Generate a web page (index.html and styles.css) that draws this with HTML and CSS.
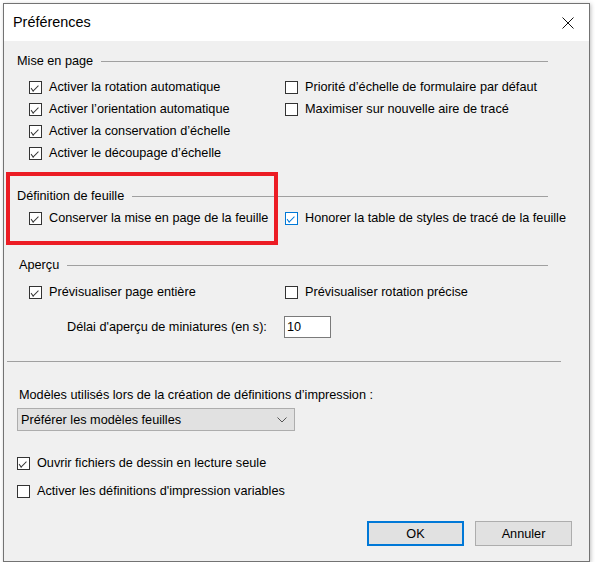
FILE: index.html
```html
<!DOCTYPE html>
<html lang="fr">
<head>
    <meta charset="UTF-8">
    <title>Préférences</title>
    <link rel="stylesheet" href="styles.css">
</head>
<body>
    <div class="window">
        <div class="titlebar">
            <span class="title">Préférences</span>
            <svg class="close" width="12" height="12" viewBox="0 0 12 12">
                <path d="M0.5 0.5 L11.5 11.5 M11.5 0.5 L0.5 11.5" stroke="#111" stroke-width="1" fill="none"/>
            </svg>
        </div>

        <div class="content">
            <!-- Mise en page -->
            <div class="group-head"><span>Mise en page</span></div>
            <div class="cols first-rows">
                <div class="col-left">
                    <div class="check on"><span class="box"></span>Activer la rotation automatique</div>
                    <div class="check on"><span class="box"></span>Activer l’orientation automatique</div>
                    <div class="check on"><span class="box"></span>Activer la conservation d’échelle</div>
                    <div class="check on"><span class="box"></span>Activer le découpage d’échelle</div>
                </div>
                <div class="col-right">
                    <div class="check"><span class="box"></span>Priorité d’échelle de formulaire par défaut</div>
                    <div class="check"><span class="box"></span>Maximiser sur nouvelle aire de tracé</div>
                </div>
            </div>

            <!-- Définition de feuille -->
            <div class="group-head head-sheet"><span>Définition de feuille</span></div>
            <div class="cols sheet-rows">
                <div class="col-left">
                    <div class="check on"><span class="box"></span>Conserver la mise en page de la feuille</div>
                </div>
                <div class="col-right">
                    <div class="check on focus"><span class="box"></span>Honorer la table de styles de tracé de la feuille</div>
                </div>
            </div>

            <!-- Aperçu -->
            <div class="group-head head-preview"><span>Aperçu</span></div>
            <div class="cols preview-rows">
                <div class="col-left">
                    <div class="check on"><span class="box"></span>Prévisualiser page entière</div>
                </div>
                <div class="col-right">
                    <div class="check"><span class="box"></span>Prévisualiser rotation précise</div>
                </div>
            </div>
            <div class="delay-row">
                <span class="delay-label">Délai d'aperçu de miniatures (en s):</span>
                <span class="text-input">10</span>
            </div>

            <div class="separator"></div>

            <div class="models-label">Modèles utilisés lors de la création de définitions d’impression :</div>
            <div class="select">
                <span>Préférer les modèles feuilles</span>
                <svg width="10" height="6" viewBox="0 0 10 6">
                    <path d="M0.5 0.5 L5 5 L9.5 0.5" stroke="#555" stroke-width="1" fill="none"/>
                </svg>
            </div>

            <div class="check on bottom-check first"><span class="box"></span>Ouvrir fichiers de dessin en lecture seule</div>
            <div class="check bottom-check second"><span class="box"></span>Activer les définitions d'impression variables</div>

            <div class="buttons">
                <button class="btn default">OK</button>
                <button class="btn">Annuler</button>
            </div>
        </div>

        <div class="highlight"></div>
    </div>
</body>
</html>
```

FILE: styles.css
```css
body {
    margin: 0;
    background-color: #ffffff;
    font-family: "Liberation Sans", Arial, sans-serif;
    font-size: 12.7px;
    color: #000;
}
.window {
    position: relative;
    margin: 3px 0 0 3px;
    width: 587px;
    height: 559px;
    box-sizing: border-box;
    border: 1px solid #737373;
    background-color: #f0f0f0;
    box-shadow: 1px 1px 4px rgba(0,0,0,0.25);
}
.titlebar {
    height: 37px;
    background-color: #ffffff;
    display: flex;
    align-items: center;
    justify-content: space-between;
    padding: 0 15px 0 9px;
}
.title {
    font-size: 14.4px;
    padding-bottom: 1px;
}
.close {
    margin-top: 1px;
}
.content {
    padding: 12px 0 0 13px;
}
.group-head {
    width: 531px;
    height: 16px;
    display: flex;
    align-items: center;
}
.group-head::after {
    content: "";
    flex: 1;
    height: 1px;
    margin-left: 8px;
    background-color: #a0a0a0;
}
.head-sheet {
    margin-top: 24px;
}
.head-preview {
    margin-top: 28px;
}
.head-preview span {
    margin-left: 2px;
}
.cols {
    display: flex;
    padding-left: 12px;
}
.first-rows {
    margin-top: 7px;
}
.sheet-rows {
    margin-top: 3px;
}
.preview-rows {
    margin-top: 8px;
}
.col-left {
    width: 256px;
}
.check {
    height: 22px;
    display: flex;
    align-items: center;
    white-space: nowrap;
}
.box {
    width: 13px;
    height: 13px;
    box-sizing: border-box;
    border: 1px solid #333;
    background-color: #fff;
    margin-right: 7px;
    flex: none;
    position: relative;
}
.check.on .box::after {
    content: "";
    position: absolute;
    left: 1px;
    top: 4px;
    width: 7px;
    height: 3px;
    border-left: 1px solid #333;
    border-bottom: 1px solid #333;
    transform: rotate(-45deg) skewX(-8deg);
    transform-origin: 3px 2px;
}
.check.focus .box {
    border-color: #0078d7;
}
.check.focus .box::after {
    border-color: #0078d7;
}
.delay-row {
    margin-top: 13px;
    height: 22px;
    display: flex;
    align-items: center;
    padding-left: 50px;
}
.delay-label {
    width: 217px;
}
.text-input {
    width: 47px;
    height: 22px;
    box-sizing: border-box;
    border: 1px solid #7a7a7a;
    background-color: #fff;
    padding-left: 2px;
    line-height: 20px;
}
.separator {
    margin: 23px 0 0 -10px;
    width: 554px;
    height: 1px;
    background-color: #a0a0a0;
}
.models-label {
    margin: 25px 0 0 2px;
    line-height: 16px;
}
.select {
    margin-top: 5px;
    width: 278px;
    height: 23px;
    box-sizing: border-box;
    border: 1px solid #adadad;
    background-color: #e1e1e1;
    display: flex;
    align-items: center;
    justify-content: space-between;
    padding: 0 7px 0 3px;
}
.bottom-check.first {
    margin-top: 21px;
}
.bottom-check.second {
    margin-top: 6px;
}
.buttons {
    margin-top: 19px;
    width: 555px;
    display: flex;
    justify-content: flex-end;
    gap: 11px;
}
.btn {
    width: 97px;
    height: 25px;
    box-sizing: border-box;
    border: 1px solid #adadad;
    background-color: #e1e1e1;
    font-family: "Liberation Sans", Arial, sans-serif;
    font-size: 12.7px;
    color: #000;
    padding: 0;
}
.btn.default {
    border: 2px solid #0078d7;
}
.highlight {
    position: absolute;
    left: 2px;
    top: 168px;
    width: 272px;
    height: 73px;
    box-sizing: border-box;
    border: 4px solid #ec1c24;
}
```
